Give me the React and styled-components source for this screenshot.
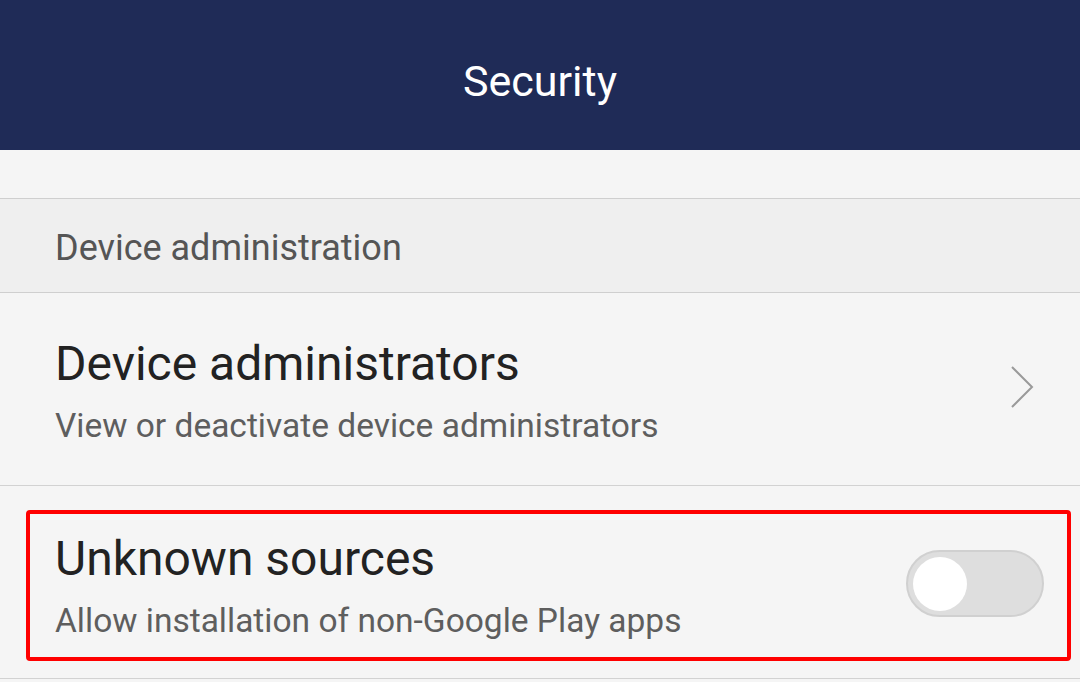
import React from 'react';
import styled, { createGlobalStyle } from 'styled-components';

const GlobalStyle = createGlobalStyle`
  html, body {
    margin: 0;
    padding: 0;
    background: #f5f5f5;
    font-family: Roboto, "Noto Sans", "Liberation Sans", sans-serif;
  }
`;

const Screen = styled.div`
  width: 1080px;
  height: 682px;
  overflow: hidden;
  background: #f5f5f5;
`;

const TitleBar = styled.div`
  height: 150px;
  background: #1f2b57;
  display: flex;
  align-items: center;
  justify-content: center;
`;

const Title = styled.h1`
  margin: 0;
  font-weight: 400;
  font-size: 43px;
  color: #ffffff;
  padding-top: 12px;
`;

const Spacer = styled.div`
  height: 48px;
  border-bottom: 1px solid #cfcfcf;
`;

const SectionHeader = styled.div`
  height: 94px;
  box-sizing: border-box;
  display: flex;
  align-items: center;
  padding: 5px 0 0 55px;
  background: #efefef;
  border-bottom: 1px solid #cfcfcf;
  font-size: 36px;
  color: #555555;
`;

const Row = styled.div`
  height: 193px;
  box-sizing: border-box;
  border-bottom: 1px solid #d2d2d2;
  padding: ${({ $boxed }) => ($boxed ? '24px 9px 17px 26px' : '4px 46px 0 55px')};
  display: flex;
  align-items: stretch;
`;

const Highlight = styled.div`
  flex: 1;
  display: flex;
  align-items: center;
  border: 4px solid #ff0000;
  border-radius: 4px;
  padding: 0 23px 0 25px;
`;

const Content = styled.div`
  flex: 1;
  display: flex;
  align-items: center;
`;

const Texts = styled.div`
  flex: 1;
  display: flex;
  flex-direction: column;
`;

const ItemTitle = styled.div`
  font-size: 48px;
  color: #222222;
  line-height: 56px;
`;

const ItemSubtitle = styled.div`
  font-size: 33.5px;
  color: #5e5e5e;
  line-height: 40px;
  margin-top: 14px;
`;

const Toggle = styled.div`
  width: 138px;
  height: 67px;
  box-sizing: border-box;
  border-radius: 34px;
  background: #dedede;
  border: 2px solid #d0d0d0;
  display: flex;
  align-items: center;
  padding-left: 5px;
  margin-top: -4px;
`;

const Knob = styled.div`
  width: 54px;
  height: 54px;
  border-radius: 50%;
  background: #ffffff;
`;

const Chevron = () => (
  <svg width="24" height="44" viewBox="0 0 24 44" style={{ marginTop: -8 }}>
    <path d="M2 2 L22 22 L2 42" fill="none" stroke="#9a9a9a" strokeWidth="2" />
  </svg>
);

export default function App() {
  return (
    <Screen>
      <GlobalStyle />
      <TitleBar>
        <Title>Security</Title>
      </TitleBar>
      <Spacer />
      <SectionHeader>Device administration</SectionHeader>
      <Row>
        <Content>
          <Texts>
            <ItemTitle>Device administrators</ItemTitle>
            <ItemSubtitle>View or deactivate device administrators</ItemSubtitle>
          </Texts>
          <Chevron />
        </Content>
      </Row>
      <Row $boxed>
        <Highlight>
          <Texts>
            <ItemTitle>Unknown sources</ItemTitle>
            <ItemSubtitle>Allow installation of non-Google Play apps</ItemSubtitle>
          </Texts>
          <Toggle>
            <Knob />
          </Toggle>
        </Highlight>
      </Row>
    </Screen>
  );
}
